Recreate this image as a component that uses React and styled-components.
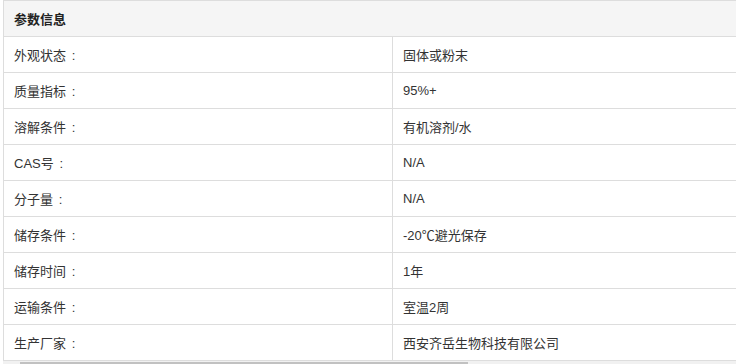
import React from "react";
import styled, { createGlobalStyle } from "styled-components";

const params = [
  ["外观状态", "固体或粉末"],
  ["质量指标", "95%+"],
  ["溶解条件", "有机溶剂/水"],
  ["CAS号", "N/A"],
  ["分子量", "N/A"],
  ["储存条件", "-20℃避光保存"],
  ["储存时间", "1年"],
  ["运输条件", "室温2周"],
  ["生产厂家", "西安齐岳生物科技有限公司"],
];

const GlobalStyle = createGlobalStyle`
  html, body {
    margin: 0;
    padding: 0;
    background: #fff;
    overflow: hidden;
  }
  body {
    font-family: "Liberation Sans", Arial, "Noto Sans CJK SC", sans-serif;
    font-size: 13px;
    color: #333;
  }
`;

const Wrap = styled.div`
  width: 800px;
  padding-left: 3px;
`;

const Table = styled.table`
  width: 779px;
  border-collapse: collapse;
  table-layout: fixed;
`;

const HeadCell = styled.th`
  height: 35px;
  padding: 0 10px;
  background: #f5f5f5;
  border: 1px solid #ddd;
  text-align: left;
  font-weight: bold;
  color: #222;
`;

const Cell = styled.td`
  height: 35px;
  padding: 0 10px;
  border: 1px solid #ddd;
  text-align: left;
  color: #333;
`;

const Colon = styled.span`
  display: inline-block;
  width: 13px;
  text-align: center;
  margin-left: 1px;
`;

const Scrollbar = styled.div`
  width: 800px;
  height: 15px;
  background: #f1f1f1;
  display: flex;
  align-items: flex-start;
  padding-left: 17px;
`;

const Thumb = styled.div`
  width: 448px;
  height: 10px;
  margin-top: 1px;
  background: #c1c1c1;
`;

export default function App() {
  return (
    <div lang="zh-CN">
      <GlobalStyle />
      <Wrap>
        <Table>
          <thead>
            <tr>
              <HeadCell colSpan={2}>参数信息</HeadCell>
            </tr>
          </thead>
          <tbody>
            {params.map(([k, v]) => (
              <tr key={k}>
                <Cell>
                  {k}
                  <Colon>:</Colon>
                </Cell>
                <Cell>{v}</Cell>
              </tr>
            ))}
          </tbody>
        </Table>
        <Scrollbar>
          <Thumb />
        </Scrollbar>
      </Wrap>
    </div>
  );
}
